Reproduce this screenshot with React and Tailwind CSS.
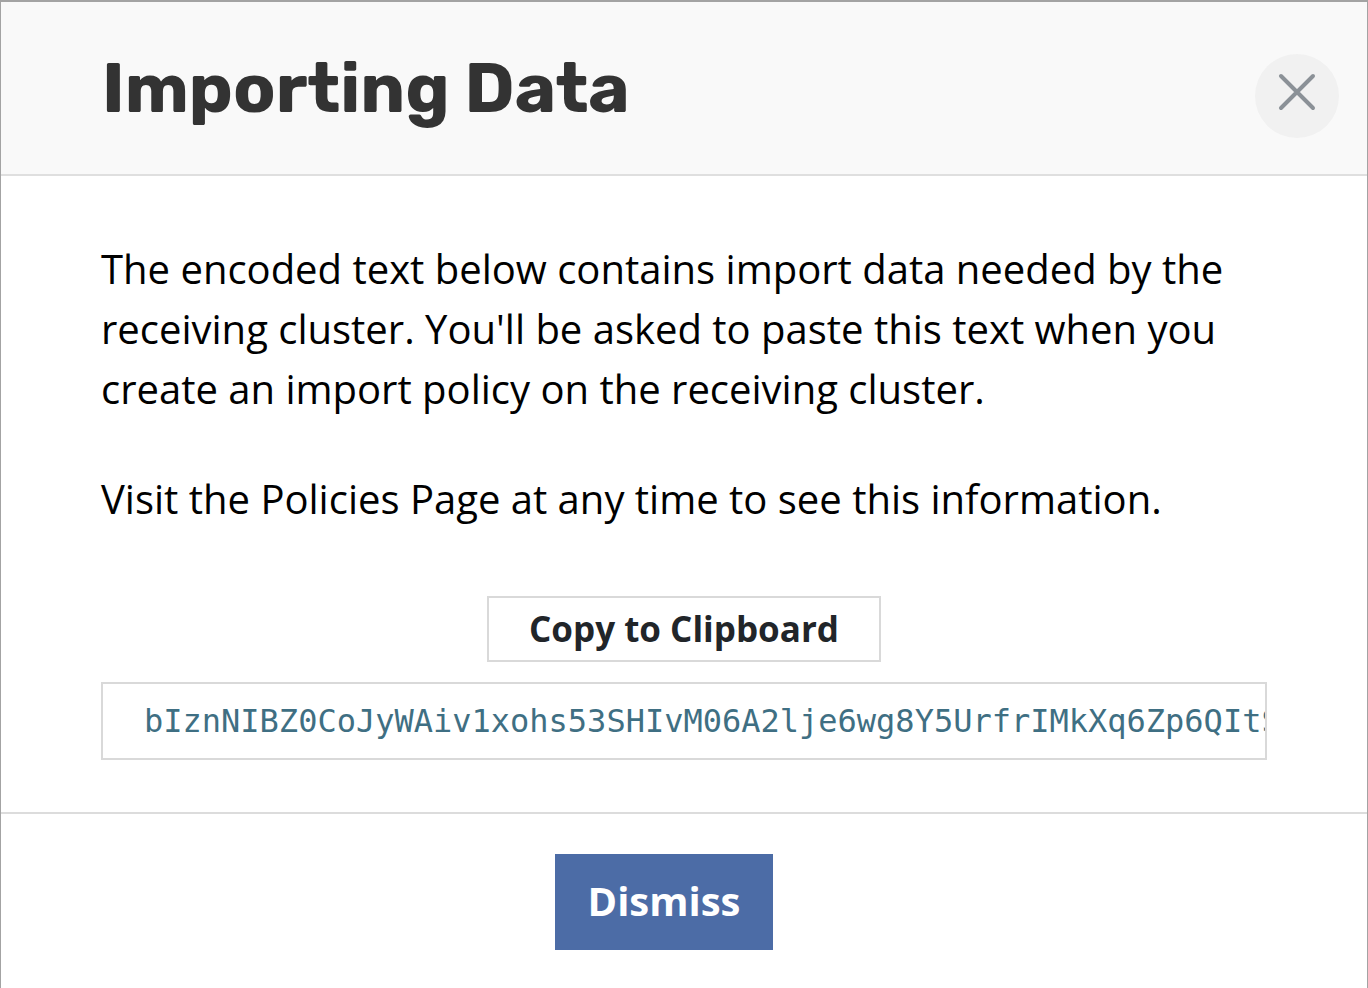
import { useState } from "react";

const encodedText =
  "bIznNIBZ0CoJyWAiv1xohs53SHIvM06A2lje6wg8Y5UrfrIMkXq6Zp6QItS";

const CloseIcon = () => (
  <svg
    viewBox="0 0 84 84"
    className="w-full h-full"
    fill="none"
    stroke="#8b9197"
    strokeWidth="4"
    strokeLinecap="round"
    aria-hidden="true"
  >
    <path d="M26 22L58 54M58 22L26 54" />
  </svg>
);

const App = () => {
  const [open, setOpen] = useState(true);

  const copyText = () => {
    navigator.clipboard?.writeText(encodedText);
  };

  return (
    <div className="min-h-screen flex flex-col bg-[#a3a3a3] px-px pt-0.5 font-['Open_Sans','Noto_Sans',sans-serif]">
      {open && (
        <div role="dialog" aria-labelledby="import-title" className="flex-1 flex flex-col bg-white">
          <header className="flex items-start justify-between bg-[#f9f9f9] border-b-2 border-[#dfdfdf] pl-[101px] pr-7 pt-[52px] pb-9">
            <h1
              id="import-title"
              className="font-['Rubik','Roboto',sans-serif] font-bold text-[70px] leading-[70px] text-[#333333]"
            >
              Importing Data
            </h1>
            <button
              type="button"
              aria-label="Close"
              onClick={() => setOpen(false)}
              className="w-[84px] h-[84px] rounded-full bg-[#f1f1f1]"
            >
              <CloseIcon />
            </button>
          </header>

          <main className="px-[100px] pt-[63px] pb-[52px] text-black">
            <p className="text-[40px] leading-[60px] mb-[50px]">
              The encoded text below contains import data needed by the receiving cluster. You'll be
              asked to paste this text when you create an import policy on the receiving cluster.
            </p>
            <p className="text-[40px] leading-[60px] mb-[67px]">
              Visit the Policies Page at any time to see this information.
            </p>

            <div className="flex justify-center mb-5">
              <button
                type="button"
                onClick={copyText}
                className="border-2 border-[#d9d9d9] bg-white px-10 h-[66px] text-[35px] leading-[60px] font-bold text-[#212529]"
              >
                Copy to Clipboard
              </button>
            </div>

            <pre className="border-2 border-[#d9d9d9] pl-[41px] h-[78px] overflow-hidden font-['DejaVu_Sans_Mono',monospace] text-[32px] leading-[74px] text-[#3f6f83]">
              {encodedText}
            </pre>
          </main>

          <footer className="flex justify-center border-t-2 border-[#dcdcdc] pt-10 pb-9 pr-10">
            <button
              type="button"
              onClick={() => setOpen(false)}
              className="bg-[#4c6ca6] px-[33px] pt-[17px] pb-[19px] text-[40px] leading-[60px] font-bold text-white"
            >
              Dismiss
            </button>
          </footer>
        </div>
      )}
    </div>
  );
};

export default App;
